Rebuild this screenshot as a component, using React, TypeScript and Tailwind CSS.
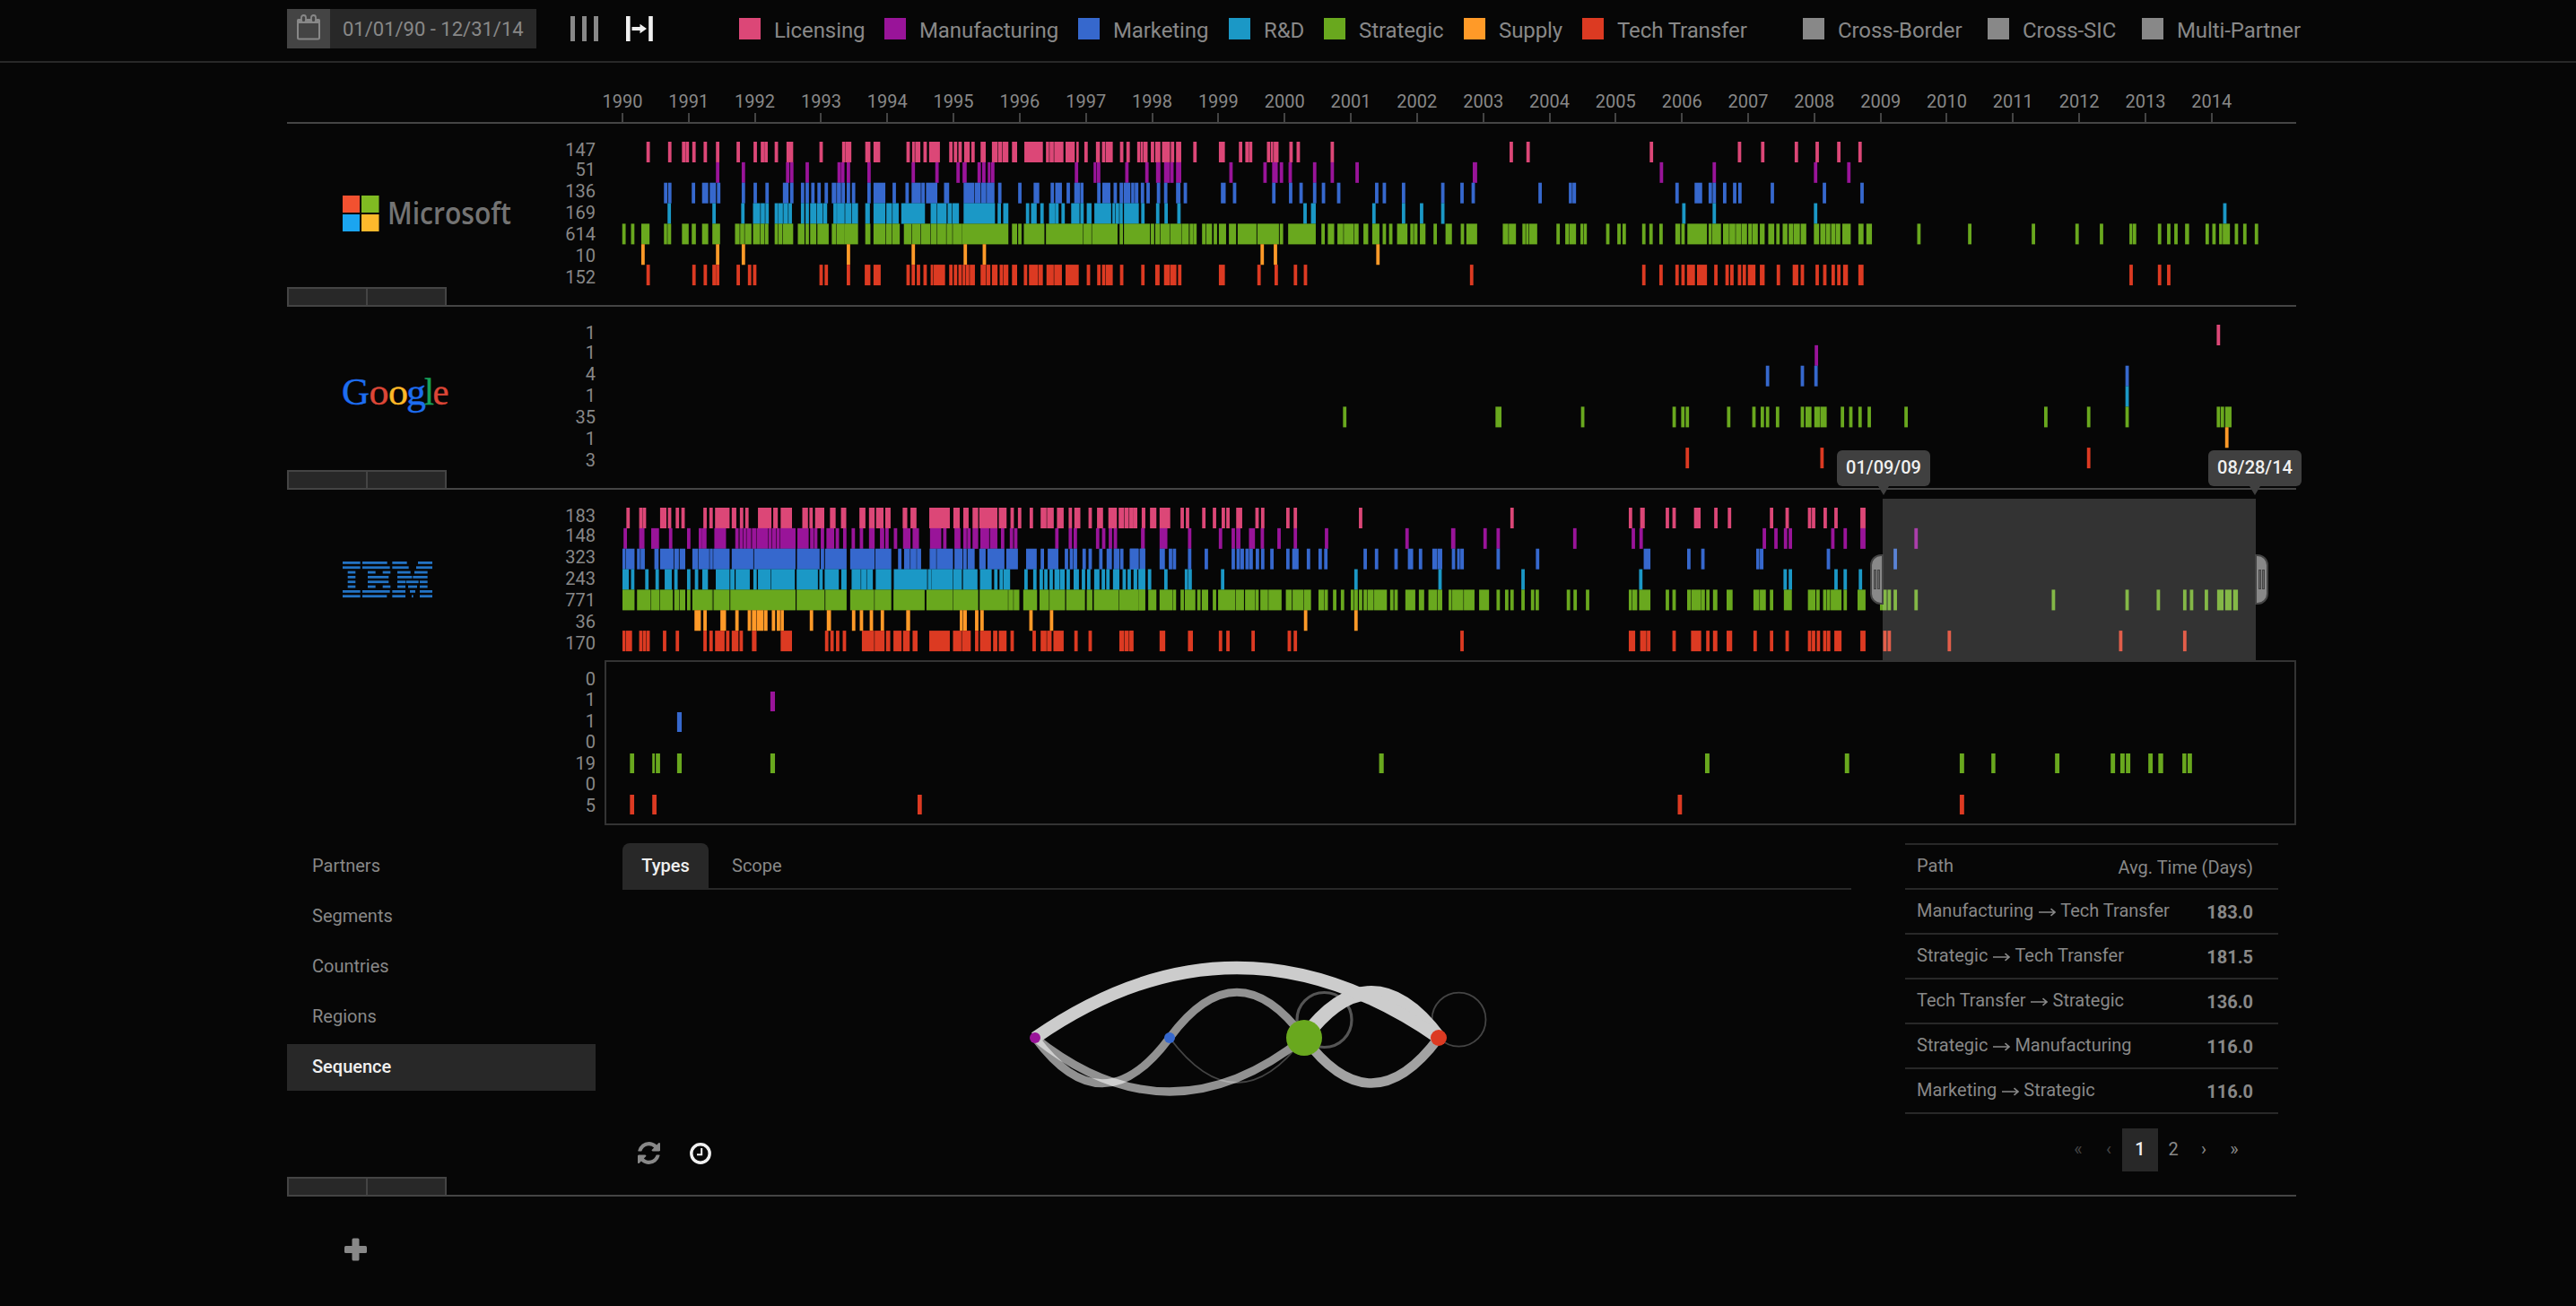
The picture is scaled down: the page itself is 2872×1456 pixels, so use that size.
import React from "react";

const PALETTE = {
  licensing: "#dc4777",
  manufacturing: "#991499",
  marketing: "#3668cd",
  rnd: "#1b98c6",
  strategic: "#69a81e",
  supply: "#ff9a28",
  transfer: "#dc3a22",
};

const ROW_COLORS = [
  PALETTE.licensing,
  PALETTE.manufacturing,
  PALETTE.marketing,
  PALETTE.rnd,
  PALETTE.strategic,
  PALETTE.supply,
  PALETTE.transfer,
];

/* Each chunk covers one stretch of the time axis. A token is either a single
   event ("84") or a run of touching events given by its edges ("62,79,93"). */
type Chunk = { origin: number; scale: number; rows: string[] };

const CHART_LEFT = 694;

const MICROSOFT: Chunk[] = [
  {
    origin: 300,
    scale: 1.7422,
    rows: [
      "733 775 802 809 822 844 868 908 941 955 962 982 1005,1018 1069 1113 1120,1131 1158,1168 1174,1187 1238 1249,1255,1265 1271 1282,1303 1321 1330 1339 1350,1361 1364 1382,1392 1404,1416,1425,1436 1443,1453 1467,1503 1509,1516,1525,1543 1547,1565",
      "868 918 1004 1012 1042 1104 1111 1122 1162 1248 1294 1335 1347,1355 1376 1385 1396,1402,1409 1565",
      "767 775 821 841,853 856,868 870 918 941 964 998,1009 1012 1033 1042 1053 1065 1079 1093,1102 1103,1111 1112 1122 1132 1162 1174,1197 1211 1236 1248,1266 1267 1276,1298 1311,1321 1349,1370 1371,1382 1383,1394,1409 1416 1455 1485,1496 1518 1527,1540 1549 1564,1568",
      "774 861 917 940,954 955,963 964 982 989,998 999,1008 1009 1033 1042 1051,1063 1064,1075 1076,1084 1096 1103,1118 1119,1131 1132,1144 1158,1167 1174,1197 1199,1210 1211,1223 1228,1274 1285,1297 1298,1316 1318,1326 1327,1340 1349,1410 1415 1426,1436 1470 1480,1491 1498 1515,1527 1527 1539 1558,1568",
      "686 703 723,739 767,774,781 802,815 821,829 841,853 861,876 905,914 915,924,937 940,954,963,970 982,989,998,1018 1027,1040 1042 1051,1063 1065,1087 1093,1102,1117 1117,1144 1158,1168 1174,1197 1198,1210,1225 1233,1249,1266,1285,1298,1316,1328,1346 1346,1436 1443,1453 1455 1466,1506 1509,1568",
      "723 868 918 1122 1248 1349 1386",
      "733 822 844 861 868 908 930 940 1069 1079 1122 1157,1168 1174,1188 1238 1248 1258 1271 1285,1291,1313 1321 1330 1339 1347,1353,1361,1371 1382,1392 1393,1401 1404,1415 1419,1426,1436 1443,1453 1466 1476,1494,1503 1510,1525,1540 1547,1568",
    ],
  },
  {
    origin: 1200,
    scale: 2.24,
    rows: [
      "0,6 20 49,59 64,73,91 109 125 152,161,168,178 186 197,210 214,234 236 249,262 292 356,371 406 422 431 476 486,493,505 532 550 635 1082 1124 1432",
      "43,51,60 122 172 199,210 219,234,243 249,262 382 467 489,503 508 530 591 635 697 990,1001 1457",
      "0,10,18 52 65,85 93 108 118,135 137,146,155 161 175 201 219 249,260 268 361,373 391 489 531 557 591 613 651 746 765 813 911 959 987 1154 1230,1239,1248 1496 1544,1563",
      "0,8 10 26,38 45,87 90,98,108,116 119,156 162 199 220 252 567 586,598 739 813 858 911 1513",
      "0,18,39,103 108 119,184 186 197,210,234,262 263,281 283 292 314 324,339 343 356,374 381,399 403,450 452,506 508 529,598 612 628,644 652,668,694,705 717,729 739,757 765 781 801,827 834,843,852 858,872 892 922,938 960 974,1001 1065,1080,1098 1114,1123,1131,1151 1199 1221,1231,1248 1259,1267,1275 1323 1351 1364 1413 1431 1456 1496,1508 1511 1526,1568",
      "460 493 749",
      "0,6 26 52 64,73,91 109 162 197,208 219,235,250 254 356,371 452 495 543 568 983 1413 1456 1496 1511 1525,1545 1550,1568",
    ],
  },
  {
    origin: 1900,
    scale: 2.24,
    rows: [
      "84 142 226 278 332 385",
      "21 274 357",
      "11 21 47 72 85 166 296 390",
      "21 274 1296",
      "0,7 11,20,42 47,62 63,79,93,107 110,120,134 139,151 160,175 180 196,208 211,223,239 241,255 274,287 290,304,315 317,328 329,340 345,366 385,398 405,419 532 659 818 927 988 1062,1070,1079 1133 1156 1174 1201,1211 1252 1269 1286,1295,1313 1325 1346 1375",
      "",
      "0,7 25 53 65 84 96 109,128 139,151 181 221,235 241 278 297 318 332 347,359 385,398 1062 1133 1156",
    ],
  },
];

const GOOGLE: Chunk[] = [
  { origin: 1490, scale: 3, rows: ["", "", "", "", "22 532,552 818 1124 1153 1168", "", "1168"] },
  {
    origin: 1900,
    scale: 2.24,
    rows: [
      "1280",
      "276",
      "154 241 275 1052",
      "1052",
      "57 120 141 154 179 241 253,268 275,290,306 341 362 385 408 500 849 956 1052 1280 1290 1301,1317",
      "1301",
      "290 956",
    ],
  },
];

const IBM: Chunk[] = [
  {
    origin: 660,
    scale: 2.529,
    rows: [
      "97 133 143 192,210 214 236 252 314 331 347,388 394,407 417 432 468,506 511,524 532,564 593,609 613 629,655 671,687 702,717 754,771 781,797 801,822 827,842 876,889 898,915 951,1009 1019,1037 1047,1062 1073,1089 1092,1143 1147,1169 1180 1201 1234 1265,1283,1302 1311,1330 1344 1360,1377 1400 1424,1441 1456,1480 1485,1501,1515,1527 1528 1550",
      "89 133,148 167,189 217 268 301 311,323 345,378 404 416,427,436,449 451,464,497,508,520,531,574 579,611 615 626 645 661,683 687 708 732 755 781,797 812,824 827 851 877,898 904,922 953,985 990 1022,1039 1047 1058 1073,1089 1095,1120 1122,1143 1153 1178 1190 1306 1344 1358 1421 1438 1457 1471 1549",
      "86,96,120 127,137,149 176,188 192,230 232,245 247,263 283,300,332,342,388 394,455 457,574 578,642 645 657,718 728,797 799,844 863 880,898,915 916,928 952,972,1018 1022,1045 1047 1059,1079 1092,1110 1115,1163 1168,1201 1224,1254 1265 1285,1315 1333 1347,1357,1368 1383 1400 1430 1451,1466 1471,1487 1489 1516,1541 1544,1560",
      "86,104 110 150 179 205,225 232 268 290 311,327 349,388 390,402 405,445 455 468,505,572 577,637 641 656,696 703,718 732,759,775,792 800,844 851,945 947 957,1018,1043 1046,1087 1094,1127 1134 1149 1160,1179 1219 1244 1262 1275 1290 1304,1320,1333 1338 1358,1373 1381 1396 1416,1431 1437 1450 1469,1487 1496 1510 1527 1541,1560",
      "86,120 127,167,191,228 232,247,263 268 283,340,344,388 390,574 577,656 658,718 728,797,844 850,938 943,1018 1019,1089 1093,1173 1174,1188 1189,1205 1216,1255 1262,1290,1334 1337,1390 1395,1411 1415,1487,1541,1560",
      "289,307 314 362,378 404 439 451,464,485,495 507 521,532,541 614 662,674 733 755 783 814 886,897 1037,1047,1057 1080 1095 1233 1291",
      "86,96,113 133,143,153,163 200 236 314 331 347,374 378 394,413 416 451,464 532,564 657 672 688 707 761,797,825 829,841 850,873 877,896 904,918 951,1009 1018,1043,1068 1080 1094,1125 1131,1143 1147,1169 1180 1242 1265,1283,1296 1301,1330 1360 1400 1487,1501,1515,1527",
    ],
  },
  {
    origin: 1260,
    scale: 2.529,
    rows: [
      "0,10,19 33 56,74 83,113 142 157 203 233 258 271 299,316 353 369 440 461 645 1072 1406 1438,1451 1510 1529",
      "31 83,105 163 250 286 299,311 335,352 368 415 461 549 776 905,917 996 1033 1249 1414 1436",
      "0,24 28,42 83,98 109 120 163 210 286 300,310,321 325,335,346 354 369 395 440 457,475 498 531 547 658 690 745 783,798 814 852,866 867,880 907 922,931,941 1033 1144 1448,1467",
      "10 24,42 50 96 154,163,174 256 632 869 1103 1435",
      "0,24,42 51,74 83,119 120 142 154,184 189 202,220 233 248,298,321 324,352 353 367,390,427 439,456 458,489 490,510 531,547 548 572 594 622,632,642 645 658 669,688,724 733 745 776,804 814,829 841,867,880 898,908,941,971 984,1012 1033 1057 1072 1103 1130 1143 1231 1250 1285 1406,1416,1430 1435,1467 1510 1529",
      "490 632",
      "0,8 83,99 163,177 250 271 342 444 461 931 1406,1424 1438,1457,1467 1529",
    ],
  },
  {
    origin: 1490,
    scale: 3,
    rows: ["1196,1218", "", "1173 1220", "", "1173,1187,1220 1221", "", "1186,1220"],
  },
  {
    origin: 1900,
    scale: 2.24,
    rows: [
      "25 59 164 203 259 269 298 325 390,403",
      "146 175 199 211 317 348 390,403 525",
      "130,139,148 306 473",
      "198 211 325 348 386",
      "5 22,33 56,71 123,139,154 164 199,219 259,278 280 297,306,316,343 348 383,403 439,456 458 473 525 868 1052 1130 1196 1213 1250 1281,1297 1301,1317 1321,1333",
      "",
      "5 22,33 56,70 123 164 203 259 269 281 297,306,315 325,343 390,403 447 458 608 1036 1196",
    ],
  },
];

const SELECTED: Chunk[] = [
  {
    origin: 660,
    scale: 2.529,
    rows: ["", "503,516", "240,253", "", "107,119 170,177 180,192 240,253 503,516", "", "107,119 170,182 918,930"],
  },
  { origin: 1260, scale: 2.529, rows: ["", "", "", "", "702,715", "", "1544,1556"] },
  {
    origin: 1880,
    scale: 2.24,
    rows: [
      "",
      "",
      "",
      "",
      "47,58 396,407 683,694 762,772 921,932 1060,1071 1084,1095 1098,1109 1154,1165 1179,1191 1239,1249 1252,1263",
      "",
      "683,694",
    ],
  },
];

function bars(chunks: Chunk[], row: number) {
  const out: { x: number; w: number }[] = [];
  for (const c of chunks) {
    for (const token of c.rows[row].split(" ").filter(Boolean)) {
      const edges = token.split(",").map((n) => c.origin + Number(n) / c.scale - CHART_LEFT);
      if (edges.length === 1) {
        out.push({ x: edges[0], w: 3.8 });
      } else {
        for (let i = 0; i < edges.length - 1; i++) {
          const last = i === edges.length - 2;
          out.push({ x: edges[i], w: edges[i + 1] - edges[i] - (last ? 0 : 0.5) });
        }
      }
    }
  }
  return out;
}

function EventStrip({
  chunks,
  top,
  pitch,
  barHeight,
  height,
}: {
  chunks: Chunk[];
  top: number;
  pitch: number;
  barHeight: number;
  height: number;
}) {
  return (
    <svg width={1866} height={height} className="block shrink-0 overflow-visible">
      {ROW_COLORS.map((color, r) => (
        <g key={color} fill={color}>
          {bars(chunks, r).map((b, i) => (
            <rect key={i} x={b.x} y={top + r * pitch} width={b.w} height={barHeight} />
          ))}
        </g>
      ))}
    </svg>
  );
}

function Counts({ values, className }: { values: number[]; className: string }) {
  return (
    <div className={`flex w-[44px] flex-col text-right text-[20px] leading-[24px] ${className}`}>
      {values.map((v, i) => (
        <span key={i} className={i === 0 ? "mb-[-2px]" : ""}>
          {v}
        </span>
      ))}
    </div>
  );
}

function Handle() {
  return (
    <div className="-mb-[2px] flex h-[22px] w-[178px] shrink-0 border-2 border-[#444444] bg-[#282828]">
      <div className="w-[88px] border-r-2 border-[#444444]" />
      <div className="flex-1" />
    </div>
  );
}

function MicrosoftLogo() {
  return (
    <svg width={190} height={42} className="block overflow-visible">
      <rect x={0} y={0} width={19} height={19} fill="#f25130" />
      <rect x={21} y={0} width={19.5} height={19} fill="#80bb22" />
      <rect x={0} y={21} width={19} height={19} fill="#1ba5f0" />
      <rect x={21} y={21} width={19.5} height={19} fill="#fdb92c" />
      <text
        x={50}
        y={32}
        textLength={138}
        lengthAdjust="spacingAndGlyphs"
        fill="#737373"
        fontSize={34}
        fontWeight={600}
        fontFamily="'Open Sans', sans-serif"
      >
        Microsoft
      </text>
    </svg>
  );
}

const GOOGLE_LETTERS: [string, number, number, string][] = [
  ["G", -1, 31, "#1d6df0"],
  ["o", 29.5, 22, "#dc4637"],
  ["o", 51, 22, "#fdb827"],
  ["g", 71, 22, "#1d6df0"],
  ["l", 91, 11, "#17a05a"],
  ["e", 100.5, 18, "#dc4637"],
];

function GoogleLogo() {
  return (
    <svg width={120} height={42} className="block overflow-visible">
      {GOOGLE_LETTERS.map(([ch, x, w, fill], i) => (
        <text
          key={i}
          x={x}
          y={28.5}
          textLength={w}
          lengthAdjust="spacingAndGlyphs"
          fill={fill}
          stroke={fill}
          strokeWidth={0.4}
          fontSize={42}
          fontFamily="'Liberation Serif', serif"
        >
          {ch}
        </text>
      ))}
    </svg>
  );
}

const IBM_STRIPES: [number, number][][] = [
  [[0, 59], [66, 149], [166, 215], [252, 300]],
  [[0, 59], [66, 158], [166, 221], [246, 300]],
  [[17, 43], [84, 110], [134, 160], [183, 227], [240, 284]],
  [[17, 43], [84, 154], [183, 232], [235, 284]],
  [[17, 43], [84, 154], [183, 210], [212, 254], [258, 284]],
  [[17, 43], [84, 110], [134, 160], [183, 210], [219, 249], [258, 284]],
  [[0, 59], [66, 158], [166, 210], [225, 243], [258, 300]],
  [[0, 59], [66, 148], [166, 210], [231, 236], [258, 300]],
];

function IbmLogo() {
  return (
    <svg width={100} height={41} className="block" fill="#2373c4">
      {IBM_STRIPES.map((row, r) =>
        row.map(([a, b], i) => (
          <rect key={`${r}-${i}`} x={a / 3} y={r * 5.33} width={(b - a) / 3} height={2.8} />
        )),
      )}
    </svg>
  );
}

function Company({
  logo,
  counts,
  chunks,
  handle = true,
  className,
}: {
  logo: React.ReactNode;
  counts: number[];
  chunks: Chunk[];
  handle?: boolean;
  className: string;
}) {
  return (
    <div className={`flex ${className}`}>
      <div className="flex w-[300px] flex-col justify-between">
        <div className="pt-[80px] pl-[62px]">{logo}</div>
        {handle && <Handle />}
      </div>
      <Counts values={counts} className="mr-[30px] pt-[17px]" />
      <EventStrip chunks={chunks} top={20} pitch={22.85} barHeight={23} height={180} />
    </div>
  );
}

const LEGEND: [string, string, string][] = [
  ["Licensing", "bg-[#dc4777]", "w-[162px]"],
  ["Manufacturing", "bg-[#991499]", "w-[216px]"],
  ["Marketing", "bg-[#3668cd]", "w-[168px]"],
  ["R&D", "bg-[#1b98c6]", "w-[106px]"],
  ["Strategic", "bg-[#69a81e]", "w-[156px]"],
  ["Supply", "bg-[#ff9a28]", "w-[132px]"],
  ["Tech Transfer", "bg-[#dc3a22]", "w-[246px]"],
  ["Cross-Border", "bg-[#888888]", "w-[206px]"],
  ["Cross-SIC", "bg-[#888888]", "w-[172px]"],
  ["Multi-Partner", "bg-[#888888]", "w-[200px]"],
];

function Header() {
  return (
    <header className="h-[70px] border-b-2 border-[#282828] pt-[10px] pl-[320px]">
      <div className="flex">
        <div className="flex h-[44px] w-[278px] items-center bg-[#282828]">
          <div className="flex h-full w-[48px] items-start justify-center bg-[#444444] pt-[6px]">
            <svg width={28} height={30} viewBox="0 0 28 30" fill="none">
              <rect x={2} y={9} width={24} height={18.5} rx={1.5} stroke="#888888" strokeWidth={2} />
              <rect x={1} y={5} width={26} height={5} rx={1.5} fill="#888888" />
              <rect x={6} y={1} width={5} height={8} rx={2.5} fill="#444444" stroke="#888888" strokeWidth={1.8} />
              <rect x={17} y={1} width={5} height={8} rx={2.5} fill="#444444" stroke="#888888" strokeWidth={1.8} />
            </svg>
          </div>
          <span className="pl-[14px] text-[22px] whitespace-nowrap">01/01/90 - 12/31/14</span>
        </div>
        <div className="ml-[38px] flex h-[44px] items-center gap-[8px]">
          <div className="h-[28px] w-[5px] bg-[#888888]" />
          <div className="h-[28px] w-[5px] bg-[#888888]" />
          <div className="h-[28px] w-[5px] bg-[#888888]" />
        </div>
        <div className="ml-[31px] flex h-[44px] items-center">
          <svg width={32} height={28} fill="#f0f0f0">
            <rect x={0} y={0} width={4.6} height={28} />
            <rect x={25.2} y={0} width={4.6} height={28} />
            <path d="M6.500 12h9V8.700L23 14l-7.500 5.300V16h-9z" />
          </svg>
        </div>
        <div className="ml-[94px] flex h-[48px] items-center text-[24px] tracking-[-0.09px]">
          {LEGEND.map(([label, swatch, width]) => (
            <div key={label} className={`flex shrink-0 items-center ${width}`}>
              <div className={`-mt-[4px] mr-[15px] size-[24px] ${swatch}`} />
              <span className="whitespace-nowrap">{label}</span>
            </div>
          ))}
        </div>
      </div>
    </header>
  );
}

function TimeAxis() {
  return (
    <div className="flex h-[68px] items-end border-b-2 border-[#444444] pl-[337px]">
      {Array.from({ length: 25 }, (_, i) => (
        <div key={i} className="flex w-[73.83px] shrink-0 flex-col items-center">
          <span className="text-[20px] leading-[24px]">{1990 + i}</span>
          <div className="mt-[1px] h-[10px] w-[2px] bg-[#444444]" />
        </div>
      ))}
    </div>
  );
}

function Tooltip({ label, className }: { label: string; className: string }) {
  return (
    <div className={`absolute -top-[54px] flex w-[104px] flex-col items-center ${className}`}>
      <div className="flex h-[40px] w-full items-center justify-center rounded-[6px] bg-[#404040] pb-[2px] text-[20px] font-medium text-[#f0f0f0]">
        {label}
      </div>
      <svg width={12} height={10} className="block">
        <path d="M0 0h12L6 10z" fill="#404040" />
      </svg>
    </div>
  );
}

function Grip({ className }: { className: string }) {
  return (
    <div
      className={`absolute top-[62px] flex h-[56px] w-[15px] items-center justify-center gap-[1px] border-2 border-[#444444] bg-[#888888] ${className}`}
    >
      <div className="h-[22px] w-[3px] border border-[#444444] bg-[#666666]" />
      <div className="h-[22px] w-[3px] border border-[#444444] bg-[#666666]" />
    </div>
  );
}

function Selection() {
  return (
    <div className="absolute top-[10px] left-[1779px] h-[180px] w-[416px] bg-white/[0.185]">
      <Tooltip label="01/09/09" className="-left-[51px]" />
      <Tooltip label="08/28/14" className="left-[363px]" />
      <Grip className="-left-[14px] rounded-l-[12px]" />
      <Grip className="left-[415px] rounded-r-[12px]" />
    </div>
  );
}

const ROWS: [string, string, string][] = [
  ["Manufacturing", "Tech Transfer", "183.0"],
  ["Strategic", "Tech Transfer", "181.5"],
  ["Tech Transfer", "Strategic", "136.0"],
  ["Strategic", "Manufacturing", "116.0"],
  ["Marketing", "Strategic", "116.0"],
];

function Arrow() {
  return (
    <svg width={19} height={10} viewBox="0 0 19 10" className="mx-[5.5px] mt-[4px] inline-block" fill="none" stroke="currentColor" strokeWidth={1.6}>
      <path d="M0 5h18M13.5 1.2L18 5l-4.500 3.800" />
    </svg>
  );
}

function PathTable() {
  return (
    <div className="w-[416px]">
      <div className="border-t-2 border-[#282828]">
        <div className="flex h-[50px] justify-between border-b-2 border-[#282828] pr-[28px] pl-[13px] leading-[46px]">
          <span>Path</span>
          <span className="pt-[2px]">Avg. Time (Days)</span>
        </div>
        {ROWS.map(([from, to, days]) => (
          <div
            key={from + to}
            className="flex h-[50px] justify-between border-b-2 border-[#282828] pr-[28px] pl-[13px] leading-[46px]"
          >
            <span className="flex items-center pb-[2px]">
              {from}
              <Arrow />
              {to}
            </span>
            <span className="pt-[2px] font-bold">{days}</span>
          </div>
        ))}
      </div>
      <div className="mt-[16px] ml-[174px] flex h-[48px] leading-[46px]">
        <span className="w-[38px] text-center text-[#444444]">«</span>
        <span className="w-[30px] text-center text-[#444444]">‹</span>
        <span className="w-[40px] bg-[#282828] text-center font-medium text-[#f0f0f0]">1</span>
        <span className="w-[34px] text-center">2</span>
        <span className="w-[34px] text-center">›</span>
        <span className="w-[34px] text-center">»</span>
      </div>
    </div>
  );
}

function SequenceGraph() {
  return (
    <svg width={600} height={240} viewBox="1100 1020 600 240" fill="none" className="block">
      <circle cx={1476.5} cy={1137} r={30.5} stroke="#555555" strokeWidth={3.2} />
      <circle cx={1626.5} cy={1136.7} r={30} stroke="#444444" strokeWidth={1.8} />
      <path d="M1304 1157Q1379 1257 1454 1157" stroke="#444444" strokeWidth={1.8} />
      <g stroke="#ffffff" strokeOpacity={0.56} strokeWidth={9}>
        <path d="M1154 1157Q1229 1258.500 1304 1157" />
        <path d="M1154 1157Q1304 1277 1454 1157" />
        <path d="M1304 1157Q1379 1055.500 1454 1157" />
      </g>
      <path d="M1454 1157Q1529 1258 1604 1157" stroke="#a2a2a2" strokeWidth={10.5} />
      <g stroke="#cccccc">
        <path d="M1454 1157Q1529 1057 1604 1157" strokeWidth={16} />
        <path d="M1154 1157Q1379 1001 1604 1157" strokeWidth={14} />
      </g>
      <circle cx={1154} cy={1157} r={6} fill={PALETTE.manufacturing} />
      <circle cx={1304} cy={1157} r={6} fill={PALETTE.marketing} />
      <circle cx={1454} cy={1157} r={20} fill={PALETTE.strategic} />
      <circle cx={1604} cy={1157} r={9} fill={PALETTE.transfer} />
    </svg>
  );
}

function Details() {
  return (
    <div className="flex h-[392px] pt-[20px] text-[20px]">
      <nav className="flex w-[344px] flex-col gap-[4px]">
        {["Partners", "Segments", "Countries", "Regions", "Sequence"].map((item) => (
          <div
            key={item}
            className={
              item === "Sequence"
                ? "h-[52px] bg-[#282828] pl-[28px] leading-[50px] font-medium text-[#f0f0f0]"
                : "h-[52px] pl-[28px] leading-[50px]"
            }
          >
            {item}
          </div>
        ))}
      </nav>
      <section className="ml-[30px] w-[1370px]">
        <div className="flex h-[52px] border-b-2 border-[#282828] leading-[50px]">
          <div className="h-[50px] w-[96px] rounded-t-[8px] bg-[#282828] text-center font-medium text-[#f0f0f0]">Types</div>
          <div className="ml-[26px]">Scope</div>
        </div>
        <div className="mt-[28px] ml-[406px]">
          <SequenceGraph />
        </div>
        <div className="mt-[13px] ml-[17px] flex items-center gap-[33px]">
          <svg width={25} height={25} viewBox="128 128 1536 1536" fill="#888888">
            <path d="M1639 1056q0 5-1 7-64 268-268 434.500t-478 166.500q-146 0-282.500-55t-243.500-157l-129 129q-19 19-45 19t-45-19-19-45v-448q0-26 19-45t45-19h448q26 0 45 19t19 45-19 45l-137 137q71 66 161 102t187 36q134 0 250-65t186-179q11-17 53-117 8-23 30-23h192q13 0 22.500 9.500t9.500 22.500zm25-800v448q0 26-19 45t-45 19h-448q-26 0-45-19t-19-45 19-45l138-138q-148-137-349-137-134 0-250 65t-186 179q-11 17-53 117-8 23-30 23h-199q-13 0-22.500-9.500t-9.500-22.500v-7q65-268 270-434.500t480-166.500q146 0 284 55.500t245 156.500l130-129q19-19 45-19t45 19 19 45z" />
          </svg>
          <svg width={24} height={24} viewBox="0 0 24 24" fill="none" stroke="#f0f0f0">
            <circle cx={12} cy={12} r={10.2} strokeWidth={3.4} />
            <path d="M13.200 6v7.200H8" strokeWidth={2} />
          </svg>
        </div>
      </section>
      <div className="ml-[60px]">
        <PathTable />
      </div>
    </div>
  );
}

export default function App() {
  return (
    <div className="h-[1456px] w-[2872px] overflow-hidden bg-[#060606] font-['Roboto',sans-serif] text-[#888888]">
      <Header />
      <main className="ml-[320px] w-[2240px]">
        <TimeAxis />
        <Company
          className="h-[204px] border-b-2 border-[#444444]"
          logo={<MicrosoftLogo />}
          counts={[147, 51, 136, 169, 614, 10, 152]}
          chunks={MICROSOFT}
        />
        <Company
          className="h-[204px] border-b-2 border-[#444444]"
          logo={<GoogleLogo />}
          counts={[1, 1, 4, 1, 35, 1, 3]}
          chunks={GOOGLE}
        />
        <div className="relative h-[190px]">
          <Company
            className="h-[190px]"
            logo={<IbmLogo />}
            counts={[183, 148, 323, 243, 771, 36, 170]}
            chunks={IBM}
            handle={false}
          />
          <Selection />
        </div>
        <div className="flex h-[184px]">
          <div className="w-[300px]" />
          <div className="mr-[10px] flex w-[44px] flex-col pt-[9.5px] text-right text-[20px] leading-[23.6px]">
            {[0, 1, 1, 0, 19, 0, 5].map((v, i) => (
              <span key={i}>{v}</span>
            ))}
          </div>
          <div className="w-[1886px] border-2 border-[#333333] pl-[18px]">
            <EventStrip chunks={SELECTED} top={10} pitch={23} barHeight={22} height={180} />
          </div>
        </div>
        <Details />
        <div className="flex h-[22px] flex-col border-b-2 border-[#444444]">
          <Handle />
        </div>
        <div className="pt-[46px] pl-[64px]">
          <svg width={25} height={26} fill="#888888" className="block">
            <rect x={8.5} y={0.5} width={8} height={25} rx={1.5} />
            <rect x={0} y={9} width={25} height={8} rx={1.5} />
          </svg>
        </div>
      </main>
    </div>
  );
}
